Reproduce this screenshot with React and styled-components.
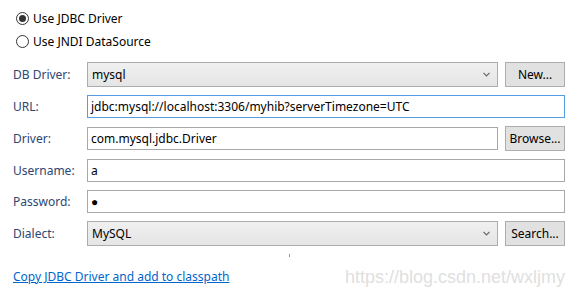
import styled, { createGlobalStyle } from "styled-components";

const GlobalStyle = createGlobalStyle`
  body {
    margin: 0;
    background: #ffffff;
    font-family: "Noto Sans", "Open Sans", sans-serif;
    font-size: 12px;
  }
`;

const Page = styled.div`
  width: 579px;
  height: 297px;
  box-sizing: border-box;
  padding: 7px 14px 0 13px;
  display: flex;
  flex-direction: column;
`;

const RadioGroup = styled.div`
  display: flex;
  flex-direction: column;
`;

const RadioRow = styled.label`
  display: flex;
  align-items: center;
  height: 23px;
  gap: 4px;
  padding-left: 3px;
  color: #000;
`;

const RadioCircle = styled.span`
  width: 11px;
  height: 11px;
  border-radius: 50%;
  border: 1px solid #333;
  background: #fff;
  display: flex;
  align-items: center;
  justify-content: center;
  &::after {
    content: "";
    width: 7px;
    height: 7px;
    border-radius: 50%;
    background: ${(p) => (p.checked ? "#333" : "transparent")};
  }
`;

const Form = styled.div`
  margin-top: 9px;
  display: grid;
  grid-template-columns: 67px 1fr 60px;
  column-gap: 7px;
  row-gap: 8px;
  align-items: center;
`;

const Label = styled.span`
  color: #2d4673;
  white-space: nowrap;
`;

const Field = styled.div`
  grid-column: ${(p) => (p.wide ? "2 / 4" : "2 / 3")};
  height: 23px;
  box-sizing: border-box;
  border: 1px solid ${(p) => (p.focused ? "#569de5" : "#a9a9a9")};
  background: #fff;
  padding: 0 3px;
  display: flex;
  align-items: center;
  color: #000;
  white-space: nowrap;
  overflow: hidden;
`;

const Combo = styled.div`
  height: 25px;
  box-sizing: border-box;
  border: 1px solid #acacac;
  background: linear-gradient(#f0f0f0, #e5e5e5);
  padding: 0 4px;
  display: flex;
  align-items: center;
  justify-content: space-between;
  color: #000;
`;

const Chevron = styled.svg`
  width: 7px;
  height: 5px;
  margin-right: 3px;
`;

const Button = styled.div`
  height: 25px;
  box-sizing: border-box;
  border: 1px solid #adadad;
  background: #e1e1e1;
  display: flex;
  align-items: center;
  justify-content: center;
  color: #000;
`;

const PasswordDot = styled.span`
  font-size: 12px;
  line-height: 1;
`;

const Grip = styled.div`
  align-self: center;
  width: 1px;
  height: 3px;
  background: #999;
  margin-top: 8px;
`;

const Footer = styled.div`
  margin-top: 8px;
  display: flex;
  justify-content: space-between;
  align-items: center;
`;

const Link = styled.a`
  color: #0066cc;
  text-decoration: underline;
  cursor: pointer;
`;

const Watermark = styled.span`
  font-family: "Liberation Sans", Arial, sans-serif;
  font-size: 18px;
  color: #e0e0e0;
  margin-top: 2px;
`;

const ComboBox = ({ value }) => (
  <Combo>
    <span>{value}</span>
    <Chevron viewBox="0 0 7 5">
      <path d="M0.5 0.8 L3.5 3.8 L6.5 0.8" fill="none" stroke="#666" strokeWidth="1.2" />
    </Chevron>
  </Combo>
);

const App = () => (
  <>
    <GlobalStyle />
    <Page>
      <RadioGroup>
        <RadioRow>
          <RadioCircle checked />
          Use JDBC Driver
        </RadioRow>
        <RadioRow>
          <RadioCircle />
          Use JNDI DataSource
        </RadioRow>
      </RadioGroup>
      <Form>
        <Label>DB Driver:</Label>
        <ComboBox value="mysql" />
        <Button>New...</Button>

        <Label>URL:</Label>
        <Field wide focused>jdbc:mysql://localhost:3306/myhib?serverTimezone=UTC</Field>

        <Label>Driver:</Label>
        <Field>com.mysql.jdbc.Driver</Field>
        <Button>Browse...</Button>

        <Label>Username:</Label>
        <Field wide>a</Field>

        <Label>Password:</Label>
        <Field wide>
          <PasswordDot>●</PasswordDot>
        </Field>

        <Label>Dialect:</Label>
        <ComboBox value="MySQL" />
        <Button>Search...</Button>
      </Form>
      <Grip />
      <Footer>
        <Link>Copy JDBC Driver and add to classpath</Link>
        <Watermark>https://blog.csdn.net/wxljmy</Watermark>
      </Footer>
    </Page>
  </>
);

export default App;
